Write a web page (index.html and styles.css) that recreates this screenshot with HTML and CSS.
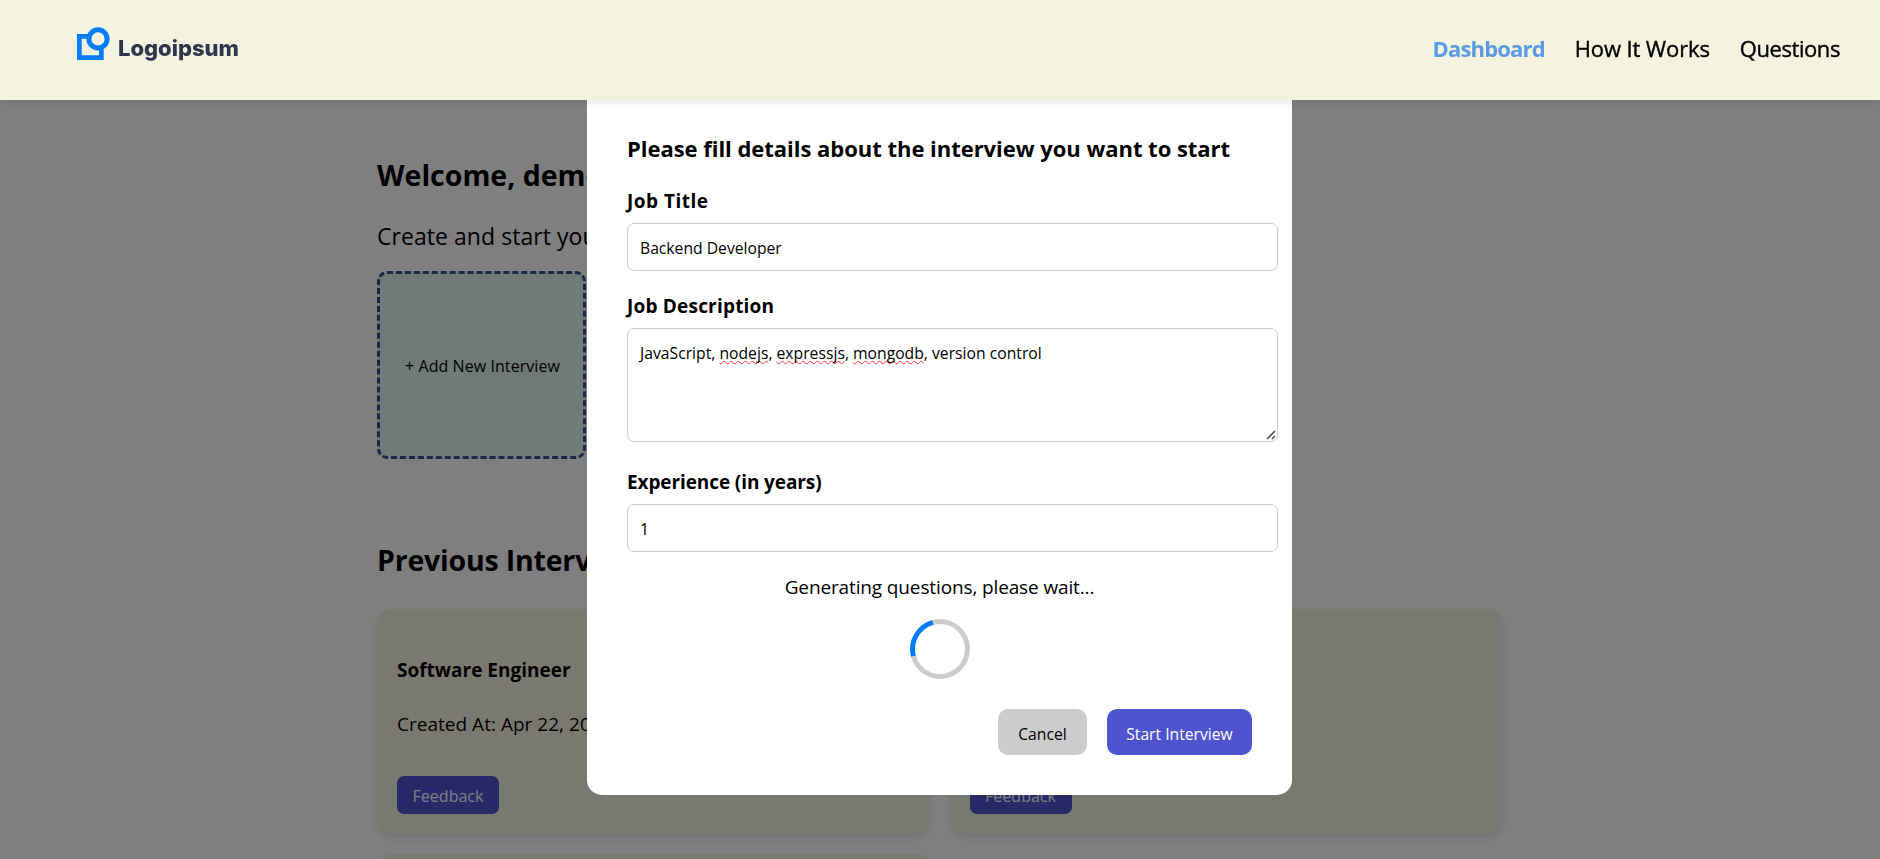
FILE: index.html
```html
<!DOCTYPE html>
<html lang="en">
<head>
<meta charset="utf-8">
<title>Dashboard</title>
<link rel="stylesheet" href="styles.css">
</head>
<body>
<header class="navbar">
  <a class="logo">
    <svg class="logo-mark" viewBox="0 0 33 34" width="33" height="34"><path d="M13 9.3H2.35V30.65H24.35V20" fill="none" stroke="#007dfe" stroke-width="4.7"/><circle cx="21" cy="11.9" r="9.1" fill="#f4f3df" stroke="#007dfe" stroke-width="5"/></svg>
    <span class="logo-text">Logoipsum</span>
  </a>
  <nav class="links">
    <a class="link active">Dashboard</a>
    <a class="link">How It Works</a>
    <a class="link questions">Questions</a>
  </nav>
</header>
<main class="page">
  <h1 class="title">Welcome, demo</h1>
  <p class="lead">Create and start your AI Interview</p>
  <div class="add-card">+ Add New Interview</div>
  <h2 class="title previous">Previous Interviews</h2>
  <section class="cards">
    <article class="card">
      <h3 class="card-title">Software Engineer</h3>
      <p class="card-date">Created At: Apr 22, 2025</p>
      <button class="feedback">Feedback</button>
    </article>
    <article class="card">
      <button class="feedback">Feedback</button>
    </article>
    <article class="card"></article>
  </section>
</main>
<div class="overlay">
  <form class="modal">
    <h3 class="modal-title">Please fill details about the interview you want to start</h3>
    <label class="label job-title">Job Title</label>
    <div class="field">Backend Developer</div>
    <label class="label description">Job Description</label>
    <div class="field area">JavaScript, <u class="typo">nodejs</u>, <u class="typo">expressjs</u>, <u class="typo">mongodb</u>, version control
      <svg class="grip" viewBox="0 0 10 10" width="10" height="10"><path d="M1 9L9 1M6 9L9 6" stroke="#505050" stroke-width="1.6" fill="none"/></svg>
    </div>
    <label class="label experience">Experience (in years)</label>
    <div class="field">1</div>
    <p class="status">Generating questions, please wait...</p>
    <div class="spinner"></div>
    <div class="actions">
      <button type="button" class="btn cancel">Cancel</button>
      <button type="button" class="btn start">Start Interview</button>
    </div>
  </form>
</div>
</body>
</html>
```
FILE: styles.css
```css
html, body { height: 100%; }
body { margin: 0; overflow: hidden; background: #fff; color: #000; font-family: "Open Sans", "Noto Sans", sans-serif; }
h1, h2, h3, p { margin: 0; }
button { border: 0; font-family: inherit; }
.navbar { position: fixed; inset: 0 0 auto 0; z-index: 20; box-sizing: border-box; height: 100px; padding: 0 40px 0 77px; display: flex; justify-content: space-between; align-items: flex-start; background: #f4f3df; box-shadow: 0 2px 10px rgba(0,0,0,.1); }
.logo { display: flex; align-items: flex-start; padding-top: 27px; gap: 8px; }
.logo-text { font: 800 22px/30px Inter, sans-serif; color: #2d364d; margin-top: 6px; }
.links { display: flex; gap: 30px; padding-top: 33px; }
.link { font-size: 22px; line-height: 30px; letter-spacing: -.12px; -webkit-text-stroke: .4px #000; }
.questions { letter-spacing: -.43px; }
.active { font-weight: 700; color: #5a9be4; letter-spacing: -.83px; -webkit-text-stroke: 0; }
.page { box-sizing: border-box; width: 1125px; height: 859px; overflow: visible; margin-left: 377px; padding-top: 155px; }
.title { font-size: 28.5px; line-height: 40px; font-weight: 700; white-space: nowrap; }
.lead { margin-top: 25px; font-size: 23px; line-height: 32px; letter-spacing: .05px; }
.add-card { box-sizing: border-box; width: 209px; height: 188px; margin-top: 19px; padding: 2px 0 0 2px; border: 3px dashed #2c5490; border-radius: 10px; background: #e0f5ed; display: flex; align-items: center; justify-content: center; font-size: 16px; letter-spacing: .07px; }
.previous { margin-top: 81px; letter-spacing: -.2px; }
.cards { display: grid; grid-template-columns: 1fr 1fr; gap: 20px; margin-top: 29px; }
.card { box-sizing: border-box; height: 225px; padding: 48px 20px 20px; display: flex; flex-direction: column; align-items: flex-start; border-radius: 15px; background: #f4f3df; box-shadow: 0 4px 8px rgba(0,0,0,.1); }
.card-title { font-size: 19px; line-height: 26px; }
.card-date { margin-top: 28px; font-size: 19px; line-height: 26px; letter-spacing: .02px; }
.feedback { margin-top: auto; width: 102px; height: 38px; padding: 2px 0 0; border-radius: 7px; background: #4e54cf; color: #fff; font-size: 16px; }
.overlay { position: fixed; inset: 0; z-index: 10; display: flex; align-items: center; background: rgba(0,0,0,.5); }
.modal { box-sizing: border-box; width: 705px; height: 731px; margin-left: 587px; padding: 69px 40px 40px; border-radius: 15px; background: #fff; }
.modal-title { font-size: 22px; line-height: 30px; white-space: nowrap; letter-spacing: -.03px; }
.label { display: block; margin-top: 22px; font-size: 19px; line-height: 26px; font-weight: 700; }
.job-title { margin-top: 25px; letter-spacing: .5px; }
.description { letter-spacing: .2px; }
.experience { margin-top: 27px; letter-spacing: -.1px; }
.field { width: 625px; height: 21px; margin-top: 9px; padding: 13px 12px 12px; border: 1px solid #ccc; border-radius: 7px; font-size: 15.7px; line-height: 22px; }
.area { position: relative; height: 87px; letter-spacing: .01px; }
.typo { text-decoration: underline wavy #f33 1.2px; text-underline-offset: 1px; text-decoration-skip-ink: none; }
.grip { position: absolute; right: 1px; bottom: 1px; }
.status { margin-top: 22px; font-size: 19px; line-height: 26px; text-align: center; letter-spacing: -.13px; }
.spinner { box-sizing: border-box; width: 60px; height: 60px; margin: 19px auto 0; border: 5px solid #ccc; border-left-color: #007bff; border-radius: 50%; transform: rotate(30deg); }
.actions { display: flex; justify-content: flex-end; gap: 20px; margin-top: 30px; }
.btn { height: 46px; padding: 3px 0 0; border-radius: 10px; font-size: 15.7px; }
.cancel { width: 89px; background: #ccc; color: #000; }
.start { width: 145px; background: #4e54cf; color: #fff; }
```
